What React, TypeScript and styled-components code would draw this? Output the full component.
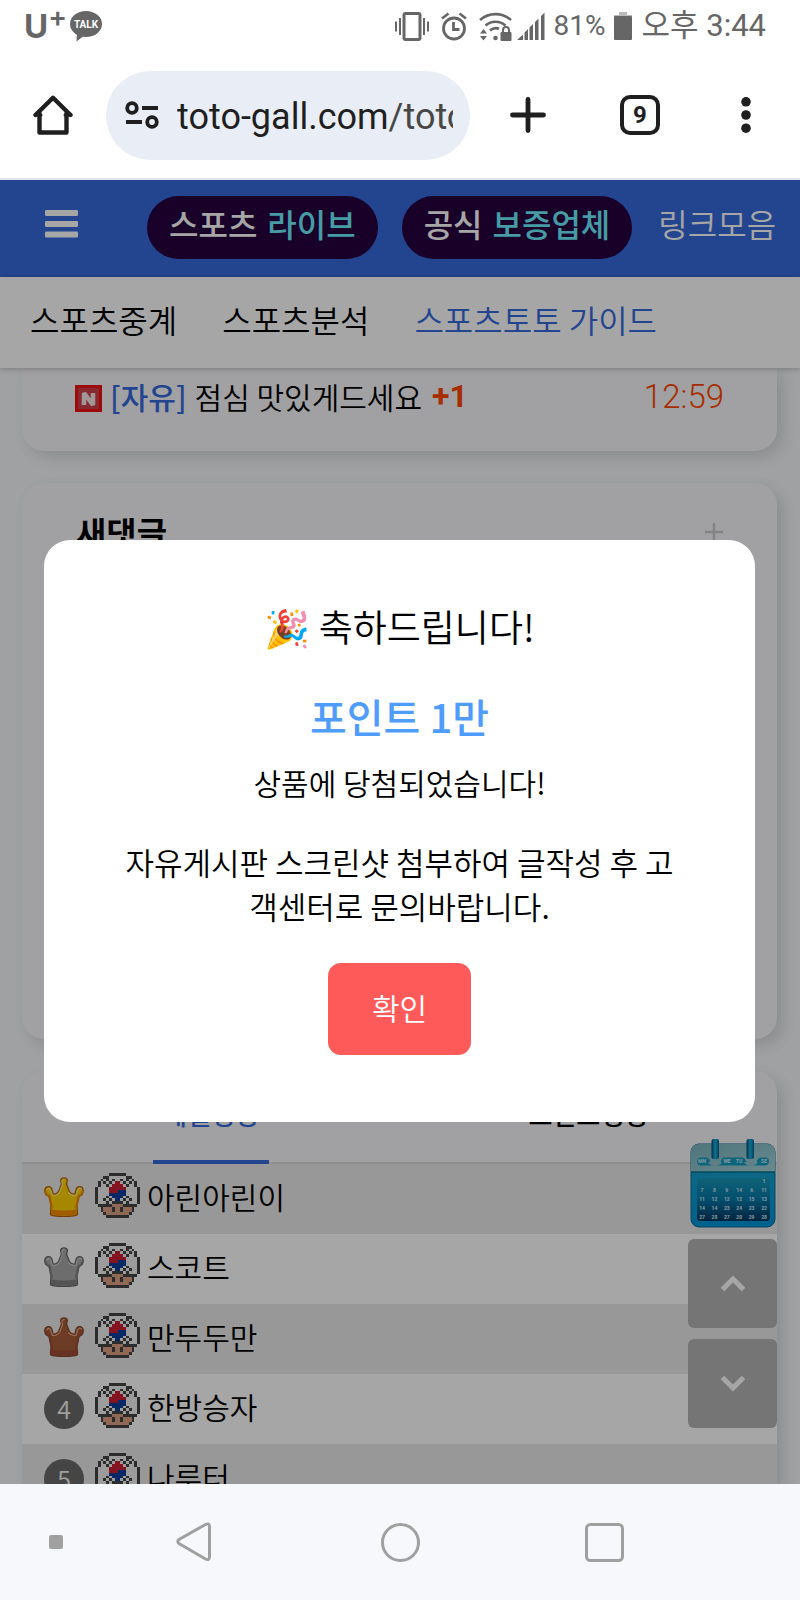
import React from "react";
import styled, { createGlobalStyle } from "styled-components";

const GlobalStyle = createGlobalStyle`
  * { box-sizing: border-box; }
  body { margin: 0; font-family: "Noto Sans CJK KR", sans-serif; font-weight: 350; color: #000; background: #fff; }
  button { padding: 0; border: 0; background: none; font: inherit; color: inherit; cursor: pointer; }
  a { color: inherit; text-decoration: none; }
  h2, p, ol { margin: 0; padding: 0; }
  svg { display: block; flex: none; }
`;

const Screen = styled.div`
  display: flex;
  flex-direction: column;
  height: 100vh;
  overflow: hidden;
`;

/* Device status bar */
const StatusBar = styled.header`
  display: flex;
  align-items: center;
  justify-content: space-between;
  flex: none;
  height: 52px;
  padding: 0 34px 0 24px;
  color: #666;
`;
const StatusGroup = styled.div<{ $gap: number }>`
  display: flex;
  align-items: center;
  gap: ${(p) => p.$gap}px;
`;
const Carrier = styled.span`
  display: flex;
  font: 700 33px/36px Inter, sans-serif;
`;
const CarrierPlus = styled.span`
  font: 600 28px/18px Inter, sans-serif;
`;
const StatusText = styled.span<{ $size: number }>`
  font: 400 ${(p) => p.$size}px/36px Roboto, "Noto Sans CJK KR", sans-serif;
  white-space: nowrap;
`;

/* Browser toolbar */
const Toolbar = styled.div`
  display: flex;
  align-items: center;
  flex: none;
  height: 128px;
  padding: 0 40px 0 33px;
  border-bottom: 2px solid #e1e4e8;
  color: #1f1f1f;
`;
const AddressPill = styled.div`
  display: flex;
  align-items: center;
  flex: 1;
  min-width: 0;
  gap: 18px;
  height: 89px;
  margin: 0 38px 0 33px;
  padding: 0 17px 0 19px;
  border-radius: 45px;
  background: #e8edf6;
`;
const Address = styled.span`
  flex: 1;
  overflow: hidden;
  padding-top: 3px;
  font: 400 36px/48px Roboto, sans-serif;
  white-space: nowrap;
`;
const AddressPath = styled.span`
  color: #474747;
`;
const ToolbarActions = styled.div`
  display: flex;
  align-items: center;
  gap: 72px;
`;
const ToolButton = styled.button<{ $width: number }>`
  display: flex;
  align-items: center;
  justify-content: center;
  width: ${(p) => p.$width}px;
  height: 40px;
`;
const TabCount = styled(ToolButton)`
  border: 4px solid #1f1f1f;
  border-radius: 10px;
  font: 700 24px/32px Roboto, sans-serif;
`;

/* Web page */
const Page = styled.main`
  position: relative;
  display: flex;
  flex-direction: column;
  flex: 1;
  min-height: 0;
  overflow: hidden;
  background: #f6f8fb;
`;
const SiteHeader = styled.div`
  display: flex;
  align-items: center;
  flex: none;
  height: 97px;
  padding: 0 24px 3px 45px;
  background: #376adc;
  color: #fff;
  font-size: 32px;
  white-space: nowrap;
`;
const MenuButton = styled.button`
  margin-right: 69px;
  padding-bottom: 6px;
`;
const HeaderLinks = styled.nav`
  display: flex;
  align-items: center;
  gap: 24px;
  line-height: 48px;
`;
const HeaderLink = styled.a`
  padding: 0 0 8px 2px;
`;
const PillLink = styled.a`
  display: flex;
  align-items: center;
  gap: 10px;
  height: 63px;
  padding: 0 22px 8px;
  border-radius: 32px;
  background: #25003f;
  font-weight: 500;
`;
const Accent = styled.span`
  color: #6ceefe;
`;
const SubNav = styled.nav`
  position: relative;
  display: flex;
  align-items: center;
  flex: none;
  gap: 45px;
  height: 91px;
  padding: 0 30px 7px;
  background: #fff;
  box-shadow: 0 1px 6px rgba(0, 0, 0, 0.25);
  font-size: 32px;
  line-height: 48px;
  white-space: nowrap;
`;
const SubNavLink = styled.a<{ $active?: boolean }>`
  color: ${(p) => (p.$active ? "#376adc" : "#000")};
`;
const Feed = styled.div`
  display: flex;
  flex-direction: column;
  flex: 1;
  gap: 32px;
  min-height: 0;
  padding: 0 23px 0 22px;
  overflow: hidden;
`;
const Card = styled.section<{ $height?: number; $continued?: boolean }>`
  flex: none;
  ${(p) => (p.$height ? `min-height: ${p.$height}px;` : "")}
  border-radius: ${(p) => (p.$continued ? "0 0 22px 22px" : "22px")};
  background: #f8f8fb;
  box-shadow: 6px 6px 16px rgba(40, 50, 40, 0.16);
`;
const PostRow = styled.a`
  display: flex;
  align-items: center;
  padding: 6px 53px 33px;
  font-size: 30px;
  line-height: 44px;
  white-space: nowrap;
`;
const PostIcon = styled.span`
  padding-top: 4px;
`;
const Category = styled.span`
  margin: 0 8px;
  color: #376adc;
  font-weight: 500;
`;
const CommentCount = styled.span`
  margin-left: 10px;
  color: #ff4500;
  font: 700 32px/36px Roboto, sans-serif;
`;
const PostTime = styled.time`
  margin-left: auto;
  padding-top: 2px;
  color: #ff4500;
  font: 300 33px/36px Roboto, sans-serif;
`;
const CardHeading = styled.div`
  display: flex;
  align-items: center;
  justify-content: space-between;
  padding: 25px 54px;
`;
const CardTitle = styled.h2`
  font-size: 33px;
  font-weight: 700;
  line-height: 48px;
`;
const Tabs = styled.div`
  display: flex;
  height: 93px;
  border-bottom: 2px solid #dcdcde;
`;
const TabCell = styled.div`
  display: flex;
  flex: 1;
  justify-content: center;
`;
const Tab = styled.button<{ $active?: boolean }>`
  height: 93px;
  padding: 0 10px 4px;
  border-bottom: 4px solid ${(p) => (p.$active ? "#376adc" : "transparent")};
  color: ${(p) => (p.$active ? "#376adc" : "#000")};
  font-size: 26px;
  font-weight: 500;
`;
const Ranking = styled.ol`
  list-style: none;
`;
const RankRow = styled.li`
  display: flex;
  align-items: center;
  height: 70px;
  padding: 0 22px;
  background: #fff;
  font-size: 30px;
  line-height: 44px;
  &:nth-child(odd) { background: #eaeaea; }
`;
const RankBadge = styled.span`
  width: 40px;
  height: 40px;
  border-radius: 20px;
  background: #6b6b6b;
  color: #f4f4f4;
  font-size: 25px;
  line-height: 38px;
  text-align: center;
`;
const MemberIcon = styled.span`
  margin: 0 7px 8px 11px;
`;
const MemberName = styled.span`
  padding-bottom: 7px;
`;
const CrownIcon = styled.span`
  margin-bottom: 4px;
`;

/* Floating shortcuts */
const Floating = styled.div`
  position: absolute;
  right: 23px;
  bottom: 56px;
  display: flex;
  flex-direction: column;
  align-items: center;
  gap: 11px;
`;
const ScrollButton = styled.button`
  display: flex;
  align-items: center;
  justify-content: center;
  width: 89px;
  height: 89px;
  border-radius: 6px;
  background: #b4b4b4;
`;

/* Prize dialog */
const Overlay = styled.div`
  position: absolute;
  inset: 0;
  display: flex;
  align-items: center;
  justify-content: center;
  padding: 0 45px 3px 44px;
  background: rgba(0, 0, 0, 0.35);
`;
const Dialog = styled.div`
  display: flex;
  flex-direction: column;
  align-items: center;
  width: 100%;
  padding: 60px 70px 67px;
  border-radius: 26px;
  background: #fff;
  text-align: center;
`;
const DialogTitle = styled.h2`
  font-size: 37px;
  font-weight: inherit;
  line-height: 52px;
`;
const Prize = styled.p`
  margin-top: 34px;
  color: #4f9cff;
  font-size: 40px;
  font-weight: 500;
  line-height: 60px;
`;
const Won = styled.p`
  margin-top: 14px;
  font-size: 30px;
  line-height: 44px;
`;
const Guide = styled.p`
  margin-top: 36px;
  font-size: 31px;
  line-height: 44px;
  word-break: break-all;
`;
const Confirm = styled.button`
  height: 92px;
  margin-top: 35px;
  padding: 0 44px 4px;
  border-radius: 13px;
  background: #ff5a5a;
  color: #fff;
  font-size: 30px;
`;

/* Device navigation */
const SystemNav = styled.nav`
  display: grid;
  grid-template-columns: 28fr 41fr 62fr 40fr 29fr;
  align-items: center;
  justify-items: center;
  flex: none;
  height: 116px;
  background: #f6f8fb;
`;

const VibrateIcon = () => (
  <svg width="34" height="29" viewBox="0 0 34 29" fill="none" stroke="#666" strokeWidth="2">
    <rect x="9" y="1.5" width="16" height="26" rx="1.5" strokeWidth="3" />
    <path d="M5 6v17M1 9.500v10M29 6v17M33 9.500v10" />
  </svg>
);
const AlarmIcon = () => (
  <svg width="26" height="29" viewBox="0 0 26 29" fill="none" stroke="#666">
    <circle cx="13" cy="16.500" r="10.500" strokeWidth="2.800" />
    <path d="M12.500 10v7.500h6" strokeWidth="2.800" />
    <path d="M1 6.500 7.500 1.500M25 6.500 18.500 1.500" strokeWidth="2.600" />
  </svg>
);
const WifiIcon = () => (
  <svg width="33" height="29" viewBox="0 0 33 29" fill="none" stroke="#666" strokeWidth="2.600">
    <path d="M1 8C10 .2 23 .2 32 8M6.500 13.500c6-5 14-5 20 0M11 18.500c3-2.600 6-3 9-1.700" />
    <circle cx="16.500" cy="26" r="2.300" fill="#666" stroke="none" />
    <path d="M1 21.500 4.500 17 8 21.500zM1 24h7l-3.500 4.500z" fill="#666" stroke="none" />
    <rect x="21.500" y="20" width="11" height="9" rx="1" fill="#666" stroke="none" />
    <path d="M24 20.500v-2.500a3 3 0 0 1 6 0v2.500" strokeWidth="2" />
  </svg>
);
const SignalIcon = () => (
  <svg width="28" height="28" viewBox="0 0 28 28" fill="#666">
    <path d="M0 28 6 22.500V28zM7.500 20.500l3.500-3.500V28H7.500zM12.500 15.500l3.500-3.500v16h-3.500zM18 10l3.500-3.500V28H18zM24 4l3.500-3.500V28H24z" />
  </svg>
);
const BatteryIcon = () => (
  <svg width="18" height="28" viewBox="0 0 18 28">
    <path d="M0 3h5V0h8v3h5v3H0z" fill="#bbb" />
    <rect y="4" width="18" height="24" rx="1" fill="#666" />
  </svg>
);
const TalkIcon = () => (
  <svg width="32" height="31" viewBox="0 0 32 31">
    <ellipse cx="16" cy="13" rx="16" ry="13" fill="#666" />
    <path d="M7 22 6.500 30.500 15 24z" fill="#666" />
    <text x="16" y="17" textAnchor="middle" fill="#fff" fontFamily="Roboto" fontWeight="700" fontSize="10">TALK</text>
  </svg>
);
const HomeIcon = () => (
  <svg width="40" height="40" viewBox="0 0 40 40" fill="none" stroke="#1f1f1f" strokeWidth="4.400" strokeLinejoin="round" strokeLinecap="round">
    <path d="M6.500 18.500v19h27v-19M2.500 19.500 20 2.500 37.500 19.500z" stroke="none" />
    <path d="M6.500 18v19.500h27V18M2.500 20 20 2.800 37.500 20" />
    <path d="M3 20h5M32 20h5" strokeWidth="3" />
  </svg>
);
const TuneIcon = () => (
  <svg width="34" height="28" viewBox="0 0 34 28" fill="none" stroke="#1f1f1f" strokeWidth="3.800">
    <circle cx="7" cy="7" r="4.800" />
    <circle cx="27" cy="21" r="4.800" />
    <path d="M17 7h16M1 21h16" />
  </svg>
);
const PlusIcon = () => (
  <svg width="36" height="36" viewBox="0 0 36 36" stroke="#1f1f1f" strokeWidth="4.800" strokeLinecap="round">
    <path d="M18 2.500v31M2.500 18h31" />
  </svg>
);
const DotsIcon = () => (
  <svg width="10" height="36" viewBox="0 0 10 36" fill="#1f1f1f">
    <circle cx="5" cy="4.800" r="4.800" />
    <circle cx="5" cy="18" r="4.800" />
    <circle cx="5" cy="31.200" r="4.800" />
  </svg>
);
const MenuIcon = () => (
  <svg width="33" height="28" viewBox="0 0 33 28" fill="#fff">
    <rect width="33" height="6" rx="1.200" />
    <rect y="11" width="33" height="6" rx="1.200" />
    <rect y="21.500" width="33" height="6" rx="1.200" />
  </svg>
);
const NewIcon = () => (
  <svg width="27" height="27" viewBox="0 0 27 27" role="img" aria-label="New">
    <rect width="27" height="27" fill="#f01010" />
    <rect x="3" y="3" width="21" height="21" fill="#d04048" />
    <path d="M9 20V8l9 12V8" fill="none" stroke="#f8e8e8" strokeWidth="4.500" strokeLinejoin="bevel" />
  </svg>
);
const MoreIcon = () => (
  <svg width="18" height="18" viewBox="0 0 18 18" stroke="#cacaca" strokeWidth="2.500">
    <path d="M9 0v18M0 9h18" />
  </svg>
);

const crownTones = {
  gold: { base: "#ffd000", edge: "#b85f00", band: "#f59000", shine: "#fff08a" },
  silver: { base: "#a8a8a8", edge: "#686868", band: "#808080", shine: "#c8c8c8" },
  bronze: { base: "#a85c38", edge: "#874530", band: "#a04c34", shine: "#eba780" },
};
type CrownTone = keyof typeof crownTones;

const Crown = ({ tone }: { tone: CrownTone }) => {
  const c = crownTones[tone];
  return (
    <svg width="40" height="40" viewBox="0 0 40 40">
      <path
        d="M6.500 37.500 7 29 5 19.500Q.8 18 .8 13.500C1 9 6.500 8 8 12.500L9 17q4 .5 6-3.500L17.500 7Q15 .8 20 .8T22.500 7L25 13.500q2 4 6 3.500l1-4.500C33.500 8 39 9 39.200 13.500Q39.200 18 35 19.500L33 29l.5 8.500Q32 39.300 20 39.300T6.500 37.500z"
        fill={c.base} stroke={c.edge} strokeWidth="1.300" strokeLinejoin="round"
      />
      <path d="M7.500 32.500q12.500 2 25 0l.3 4.500Q31 38.600 20 38.600T7.200 37z" fill={c.band} />
      <path d="M1.500 14Q2 18 5.500 18.800L8 31M38.500 14Q38 18 34.500 18.800L32 31" fill="none" stroke={c.band} strokeWidth="2" />
      <path d="M3 12.500q2.500-3 4 1.500l1.500 4.500q5 .5 7.500-4L18.500 7.500Q17 3 20 2.300M24.500 15.500q2.500 3.500 7.500 3L33.500 13q1.500-3 4-1" fill="none" stroke={c.shine} strokeWidth="1.200" strokeLinecap="round" />
    </svg>
  );
};

const mushroomRows = [
  ".....KKKKKK.....",
  "...KKWWWWWWKK...",
  "..KWKWKWWKWKWK..",
  ".KWKWKWRRWKWKWK.",
  ".KWWKWRRRRWKWWK.",
  "KWWWWRRRRRRWWWWK",
  "KWWWWRRRBBBWWWWK",
  "KWWWWBBBBBBWWWWK",
  "KWWWKWBBBBWKWWWK",
  "KWWKWKWBBWKWKWWK",
  "KWWWKWKKKKWKWWWK",
  ".KKKKKSSSSKKKKK.",
  "..KSSSKSSKSSSK..",
  "..KSSSKSSKSSSK..",
  "...KSSSSSSSSK...",
  "....KKKKKKKK....",
];
const mushroomColors: Record<string, string> = { K: "#444444", W: "#f0f0f0", R: "#cc1f34", B: "#0a3f9c", S: "#dca283" };

const Mushroom = () => (
  <svg width="45" height="45" viewBox="0 0 16 16" shapeRendering="crispEdges">
    {mushroomRows.flatMap((row, y) =>
      row.split("").map((c, x) => (c === "." ? null : <rect key={`${x}-${y}`} x={x} y={y} width="1" height="1" fill={mushroomColors[c]} />))
    )}
  </svg>
);

const calendarDays = [
  ["", "", "", "", "", "1"],
  ["7", "8", "9", "14", "6", "11"],
  ["11", "12", "12", "12", "15", "13"],
  ["14", "14", "23", "24", "23", "22"],
  ["27", "28", "27", "20", "29", "28"],
];
const CalendarIcon = () => (
  <svg width="86" height="89" viewBox="0 0 86 89">
    <defs>
      <linearGradient id="sheet" x1="0" y1="0" x2="0" y2="1">
        <stop offset="0" stopColor="#1ea5c4" />
        <stop offset="1" stopColor="#0095d8" />
      </linearGradient>
      <linearGradient id="grid" x1="0" y1="0" x2="0" y2="1">
        <stop offset="0" stopColor="#1799b8" />
        <stop offset=".5" stopColor="#0678a8" />
        <stop offset="1" stopColor="#04375f" />
      </linearGradient>
      <linearGradient id="top" x1="0" y1="0" x2="1" y2="1">
        <stop offset="0" stopColor="#78b5bf" />
        <stop offset="1" stopColor="#a5d3da" />
      </linearGradient>
      <linearGradient id="ring" x1="0" y1="0" x2="1" y2="0">
        <stop offset="0" stopColor="#064a72" />
        <stop offset=".5" stopColor="#1bb0dc" />
        <stop offset="1" stopColor="#075b88" />
      </linearGradient>
    </defs>
    <rect x="1" y="5" width="84" height="83" rx="8" fill="url(#sheet)" stroke="#0a6c94" />
    <path d="M1 33V13q0-8 8-8h68q8 0 8 8v20z" fill="url(#top)" />
    <path d="M1 33h84" stroke="#08708c" strokeWidth="1.500" />
    <path d="M11 18.500h5q3 0 4 3.500 1 4 5 4t6-4q1-3.500 3-3.500h18q3 0 4 3.500 2 4 6 4t5-4q1-3.500 4-3.500h4q4 0 4 4t-4 4H11q-4 0-4-4t4-4z" fill="#159bc0" />
    <path d="M18 23q2 4 7 4t7-4M54 23q2 4 7 4t7-4" fill="#8fc4cd" />
    <rect x="7" y="39" width="73" height="43" rx="3" fill="url(#grid)" />
    <rect x="21.500" y="0" width="7.500" height="20" rx="2" fill="url(#ring)" />
    <rect x="56.500" y="0" width="7.500" height="20" rx="2" fill="url(#ring)" />
    <g fill="#cfeaf5" fontFamily="Roboto" fontWeight="700" fontSize="5" textAnchor="middle">
      <text x="12" y="24">MN</text>
      <text x="37" y="24">WE</text>
      <text x="49" y="24">TU</text>
      <text x="74" y="24">SE</text>
      {calendarDays.flatMap((week, r) =>
        week.map((day, c) => (day ? <text key={`${r}-${c}`} x={12 + c * 12.4} y={44 + r * 9}>{day}</text> : null))
      )}
    </g>
  </svg>
);
const Chevron = ({ down }: { down?: boolean }) => (
  <svg width="26" height="17" viewBox="0 0 26 17" fill="none" stroke="#fff" strokeWidth="5">
    <path d={down ? "M2.500 2.500 13 13 23.500 2.500" : "M2.500 14.500 13 4 23.500 14.500"} />
  </svg>
);
const HideIcon = () => (
  <svg width="14" height="14" viewBox="0 0 14 14"><rect width="14" height="14" rx="2" fill="#a0a0a0" /></svg>
);
const BackIcon = () => (
  <svg width="36" height="40" viewBox="0 0 36 40" fill="none" stroke="#a0a0a0" strokeWidth="3">
    <path d="M29.500 2.500 3 17.500q-2.500 2 0 4L29.500 37q4 2 4-2.500V5q0-4.500-4-2.500z" />
  </svg>
);
const CircleIcon = () => (
  <svg width="39" height="39" viewBox="0 0 39 39" fill="none" stroke="#a0a0a0" strokeWidth="3"><circle cx="19.500" cy="19.500" r="18" /></svg>
);
const RecentIcon = () => (
  <svg width="39" height="39" viewBox="0 0 39 39" fill="none" stroke="#a0a0a0" strokeWidth="3"><rect x="1.500" y="1.500" width="36" height="36" rx="4" /></svg>
);

const members: { name: string; crown?: CrownTone }[] = [
  { name: "아린아린이", crown: "gold" },
  { name: "스코트", crown: "silver" },
  { name: "만두두만", crown: "bronze" },
  { name: "한방승자" },
  { name: "나루터" },
];

export default function App() {
  return (
    <Screen>
      <GlobalStyle />
      <StatusBar>
        <StatusGroup $gap={3}>
          <Carrier>U<CarrierPlus>+</CarrierPlus></Carrier>
          <TalkIcon />
        </StatusGroup>
        <StatusGroup $gap={9}>
          <StatusGroup $gap={5}>
            <StatusGroup $gap={12}>
              <VibrateIcon />
              <AlarmIcon />
              <WifiIcon />
            </StatusGroup>
            <SignalIcon />
          </StatusGroup>
          <StatusText $size={28}>81%</StatusText>
          <BatteryIcon />
          <StatusText $size={31}>오후 3:44</StatusText>
        </StatusGroup>
      </StatusBar>

      <Toolbar>
        <ToolButton $width={40} aria-label="Home"><HomeIcon /></ToolButton>
        <AddressPill>
          <TuneIcon />
          <Address>toto-gall.com<AddressPath>/toto</AddressPath></Address>
        </AddressPill>
        <ToolbarActions>
          <ToolButton $width={40} aria-label="New tab"><PlusIcon /></ToolButton>
          <TabCount $width={40}>9</TabCount>
          <ToolButton $width={28} aria-label="More"><DotsIcon /></ToolButton>
        </ToolbarActions>
      </Toolbar>

      <Page>
        <SiteHeader>
          <MenuButton aria-label="Menu"><MenuIcon /></MenuButton>
          <HeaderLinks>
            <PillLink href="#live">스포츠 <Accent>라이브</Accent></PillLink>
            <PillLink href="#partners">공식 <Accent>보증업체</Accent></PillLink>
            <HeaderLink href="#links">링크모음</HeaderLink>
          </HeaderLinks>
        </SiteHeader>
        <SubNav>
          <SubNavLink href="#broadcast">스포츠중계</SubNavLink>
          <SubNavLink href="#analysis">스포츠분석</SubNavLink>
          <SubNavLink href="#guide" $active>스포츠토토 가이드</SubNavLink>
        </SubNav>
        <Feed>
          <Card $continued>
            <PostRow href="#post">
              <PostIcon><NewIcon /></PostIcon>
              <Category>[자유]</Category>
              <span>점심 맛있게드세요</span>
              <CommentCount>+1</CommentCount>
              <PostTime>12:59</PostTime>
            </PostRow>
          </Card>
          <Card $height={556}>
            <CardHeading>
              <CardTitle>새댓글</CardTitle>
              <button aria-label="More comments"><MoreIcon /></button>
            </CardHeading>
          </Card>
          <Card>
            <Tabs>
              <TabCell><Tab $active>레벨랭킹</Tab></TabCell>
              <TabCell><Tab>포인트랭킹</Tab></TabCell>
            </Tabs>
            <Ranking>
              {members.map((m, i) => (
                <RankRow key={m.name}>
                  {m.crown ? <CrownIcon><Crown tone={m.crown} /></CrownIcon> : <RankBadge>{i + 1}</RankBadge>}
                  <MemberIcon><Mushroom /></MemberIcon>
                  <MemberName>{m.name}</MemberName>
                </RankRow>
              ))}
            </Ranking>
          </Card>
        </Feed>
        <Floating>
          <a href="#attendance" aria-label="Calendar"><CalendarIcon /></a>
          <ScrollButton aria-label="Scroll up"><Chevron /></ScrollButton>
          <ScrollButton aria-label="Scroll down"><Chevron down /></ScrollButton>
        </Floating>
        <Overlay>
          <Dialog role="dialog" aria-modal="true" aria-labelledby="dialog-title">
            <DialogTitle id="dialog-title">🎉 축하드립니다!</DialogTitle>
            <Prize>포인트 1만</Prize>
            <Won>상품에 당첨되었습니다!</Won>
            <Guide>자유게시판 스크린샷 첨부하여 글작성 후 고객센터로 문의바랍니다.</Guide>
            <Confirm>확인</Confirm>
          </Dialog>
        </Overlay>
      </Page>

      <SystemNav>
        <button aria-label="Hide bar"><HideIcon /></button>
        <button aria-label="Back"><BackIcon /></button>
        <button aria-label="Home screen"><CircleIcon /></button>
        <button aria-label="Recent apps"><RecentIcon /></button>
      </SystemNav>
    </Screen>
  );
}
